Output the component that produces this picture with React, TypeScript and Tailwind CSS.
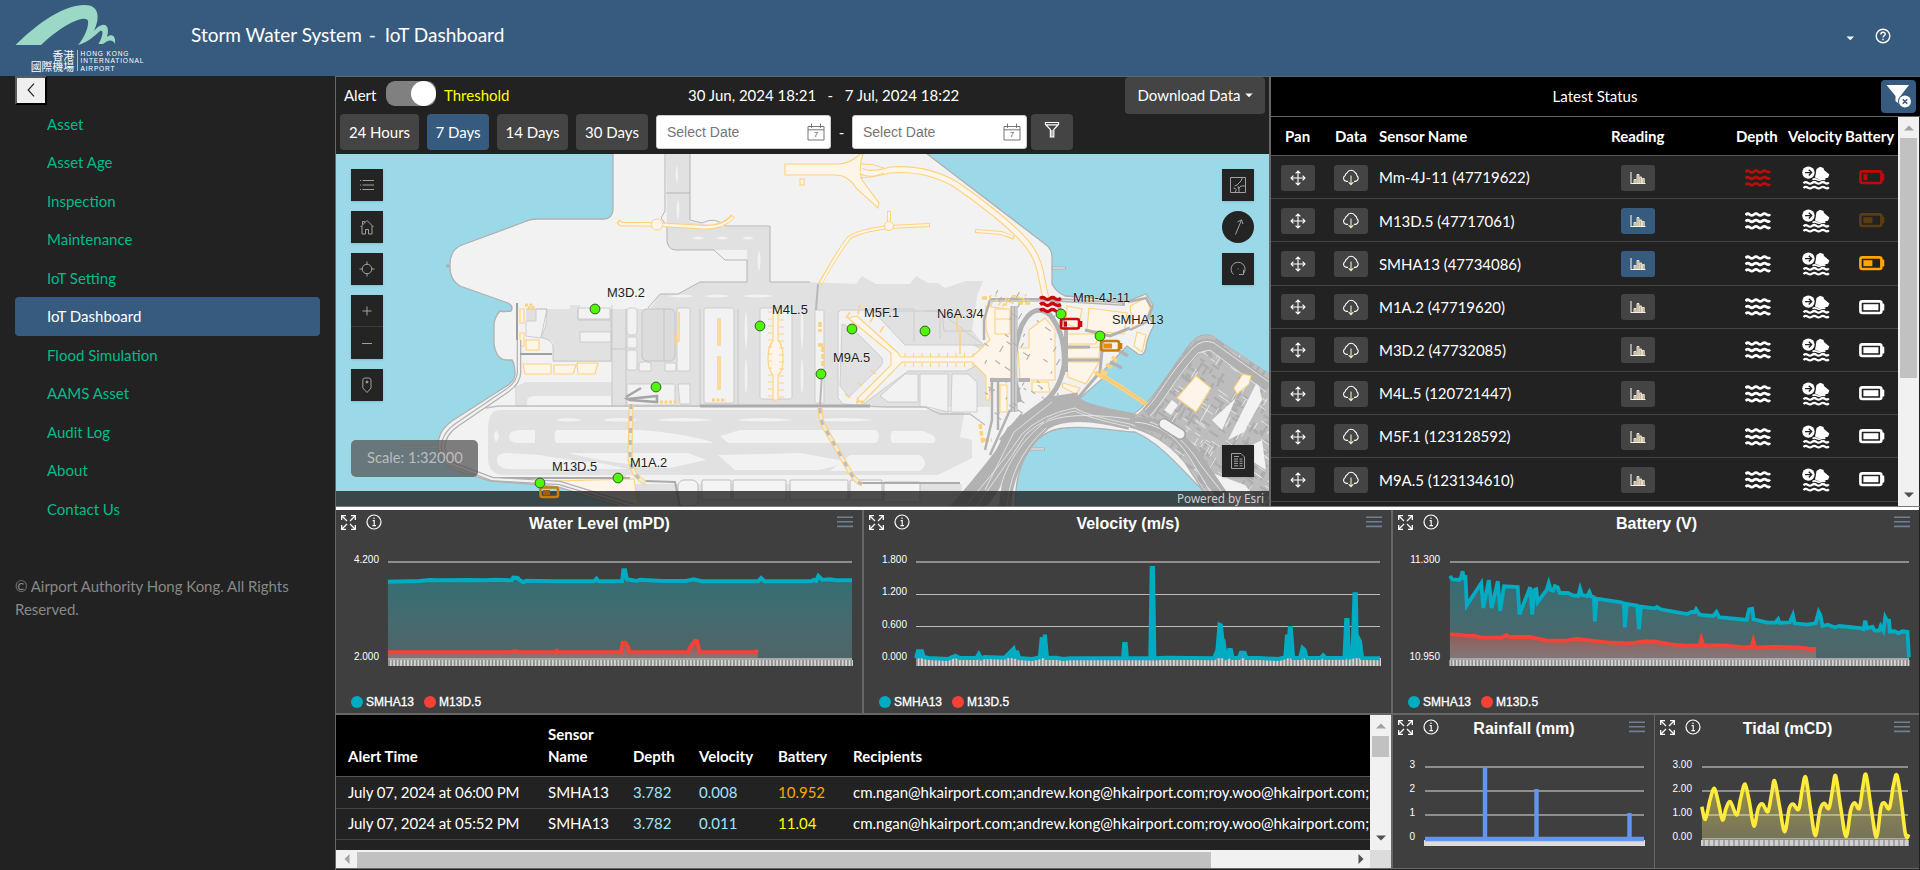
import type { ReactNode } from 'react';

type Pt = [number, number];

const NAV = ['Asset', 'Asset Age', 'Inspection', 'Maintenance', 'IoT Setting', 'IoT Dashboard', 'Flood Simulation', 'AAMS Asset', 'Audit Log', 'About', 'Contact Us'];

const SENSORS = [
  { name: 'Mm-4J-11 (47719622)', on: false, depth: '#b90e0a', battery: '#c00a0a', level: 4 },
  { name: 'M13D.5 (47717061)', on: true, depth: '#ffffff', battery: '#5a3d10', level: 9 },
  { name: 'SMHA13 (47734086)', on: true, depth: '#ffffff', battery: '#ffa500', level: 9 },
  { name: 'M1A.2 (47719620)', on: false, depth: '#ffffff', battery: '#ffffff', level: 15 },
  { name: 'M3D.2 (47732085)', on: false, depth: '#ffffff', battery: '#ffffff', level: 15 },
  { name: 'M4L.5 (120721447)', on: false, depth: '#ffffff', battery: '#ffffff', level: 15 },
  { name: 'M5F.1 (123128592)', on: false, depth: '#ffffff', battery: '#ffffff', level: 15 },
  { name: 'M9A.5 (123134610)', on: false, depth: '#ffffff', battery: '#ffffff', level: 15 },
];

const ALERTS = [
  { time: 'July 07, 2024 at 06:00 PM', depth: '3.782', velocity: '0.008', battery: '10.952', low: true },
  { time: 'July 07, 2024 at 05:52 PM', depth: '3.782', velocity: '0.011', battery: '11.04', low: false },
];
const RECIPIENTS = 'cm.ngan@hkairport.com;andrew.kong@hkairport.com;roy.woo@hkairport.com;';

/* ---------- icons ---------- */

function Waves({ color }: { color: string }) {
  const w = 'q2.1 -2.2 4.2 -0.5 t4.2 0 t4.2 0 t4.2 0 t4.2 0 t3.4 -0.4';
  return (
    <svg width="26" height="20" viewBox="0 0 26 20" fill="none" stroke={color} strokeWidth="2.7">
      <path d={`M.5 4 ${w} M.5 10.4 ${w} M.5 16.8 ${w}`} />
    </svg>
  );
}

function Flow() {
  const w = 'q2.1 -2 4.3 -0.4 t4.3 0 t4.3 0 t4.3 0 t4.3 0 t3.8 -0.4';
  return (
    <svg width="28" height="24" viewBox="0 0 28 24" fill="none">
      <path d="M13 11.5 L14.5 3 L18 .8 L21.5 2 L22 4 L27.4 8.6 L26 11.8 L23 12.2 L21 14 L15 12.6 Z" fill="#fff" />
      <circle cx="6.7" cy="6.8" r="6.9" fill="#222" />
      <circle cx="6.4" cy="6.6" r="6.2" fill="#fff" />
      <path d="M3 6.6 H9.6 M6.8 3.8 L9.6 6.6 L6.8 9.4" stroke="#222" strokeWidth="1.4" />
      <path d={`M1.5 17.2 ${w} M1.5 22 ${w}`} stroke="#fff" strokeWidth="2.2" />
      <path d="M10.5 13.6 q2 -1.400 4.300 -.1 t4.300 0 t4.300 0" stroke="#fff" strokeWidth="1.6" />
    </svg>
  );
}

function Battery({ color, level }: { color: string; level: number }) {
  return (
    <svg width="26" height="15" viewBox="0 0 26 15" fill="none">
      <rect x="1.4" y="1.4" width="21" height="11.6" rx="2" stroke={color} strokeWidth="2.6" />
      <rect x="22.5" y="3.6" width="2.8" height="7" rx="1.2" fill={color} />
      <rect x="4.4" y="4.2" width={level} height="6" fill={color} />
    </svg>
  );
}

function PanIcon() {
  return (
    <svg width="16" height="16" viewBox="0 0 16 16" fill="none" stroke="#fff" strokeWidth="1.1">
      <path d="M8 1 V15 M1 8 H15 M5.6 3.4 L8 1 L10.4 3.4 M5.6 12.6 L8 15 L10.4 12.6 M3.4 5.6 L1 8 L3.4 10.4 M12.6 5.6 L15 8 L12.6 10.4" />
    </svg>
  );
}

function CloudIcon() {
  return (
    <svg width="18" height="17" viewBox="0 0 18 17" fill="none" stroke="#fff" strokeWidth="1.1">
      <path d="M6 12.400 H4.400 A3.200 3.200 0 0 1 3.200 6.400 A3.600 3.600 0 0 1 5.200 3.800 A4.300 4.300 0 0 1 13 3.600 A4 4 0 0 1 15 6.800 A3.200 3.200 0 0 1 13.800 12.400 H12" />
      <path d="M9 6.600 V15.600 M6.600 13.200 L9 15.600 L11.400 13.200" stroke="#f6ecc9" />
    </svg>
  );
}

function BarsIcon() {
  return (
    <svg width="16" height="14" viewBox="0 0 16 14" fill="none">
      <path d="M1 1 V12.5 H15.500" stroke="#f7f3e4" strokeWidth="1.1" />
      <path d="M4 12 V8.500 H6 V12 M7 12 V3.500 H9 V12 M9.800 12 V6 H11.600 V12 M12.400 12 V7.500 H14.200 V12" fill="#a8a08a" stroke="#efe7cf" strokeWidth="1" />
    </svg>
  );
}

function ExpandIcon() {
  return (
    <svg width="15" height="15" viewBox="0 0 15 15" fill="none" stroke="#fff" strokeWidth="1.3">
      <path d="M.7 5 V.7 H5 M10 .7 H14.3 V5 M14.3 10 V14.3 H10 M5 14.3 H.7 V10" />
      <path d="M1 1 L6 6 M14 1 L9 6 M14 14 L9 9 M1 14 L6 9" />
    </svg>
  );
}

function InfoIcon() {
  return (
    <svg width="16" height="16" viewBox="0 0 16 16" fill="none" stroke="#fff">
      <circle cx="8" cy="8" r="7" strokeWidth="1.2" />
      <path d="M6.6 6.6 H8.2 V11.6 M6.4 11.6 H10" strokeWidth="1.1" />
      <circle cx="8" cy="4.3" r=".8" fill="#fff" stroke="none" />
    </svg>
  );
}

function MenuIcon() {
  return (
    <svg width="16" height="12" viewBox="0 0 16 12" stroke="#6e8192" strokeWidth="1.6">
      <path d="M0 1.2 H16 M0 5.8 H16 M0 10.4 H16" />
    </svg>
  );
}

function CalendarIcon() {
  return (
    <svg width="18" height="18" viewBox="0 0 18 18" fill="none" stroke="#777" strokeWidth="1">
      <path d="M1 3.5 H17 V17 H1 Z M1 6.8 H17 M4.5 .5 V5 M13.5 .5 V5" />
      <text x="9" y="14.4" textAnchor="middle" fontSize="8" fill="#555" stroke="none" fontFamily="Liberation Sans, sans-serif">7</text>
    </svg>
  );
}

function Triangle({ dir, dark }: { dir: 'up' | 'down' | 'left' | 'right'; dark?: boolean }) {
  const d = { up: 'M0 7.5 L5 2.5 L10 7.5 Z', down: 'M0 2.5 L5 7.5 L10 2.5 Z', left: 'M7.5 0 L2.5 5 L7.5 10 Z', right: 'M2.5 0 L7.5 5 L2.5 10 Z' }[dir];
  return (
    <svg width="10" height="10" viewBox="0 0 10 10" className="shrink-0">
      <path d={d} fill={dark ? '#505050' : '#a3a3a3'} />
    </svg>
  );
}

/* ---------- map ---------- */

const PIERS = Array.from({ length: 13 }, (_, i) => 312 + i * 7);
const SPINE = Array.from({ length: 9 }, (_, i) => 905 + i * 8.5);

function lcg(seed: number) {
  let s = seed;
  return () => {
    s = (s * 1664525 + 1013904223) % 4294967296;
    return s / 4294967296;
  };
}

function scatter(seed: number, n: number, x: number, y: number, w: number, h: number, len: number) {
  const r = lcg(seed);
  let d = '';
  for (let i = 0; i < n; i++) {
    const a = r() > 0.45 ? 0.6 : 2.1;
    const l = len * (0.4 + r());
    const px = x + r() * w;
    const py = y + r() * h;
    d += `M${px.toFixed(1)} ${py.toFixed(1)} l${(Math.cos(a) * l).toFixed(1)} ${(Math.sin(a) * l).toFixed(1)} `;
  }
  return d;
}

const MARKERS: { x: number; y: number; label?: string; lx?: number; ly?: number }[] = [
  { x: 595, y: 309, label: 'M3D.2', lx: 607, ly: 297 },
  { x: 656, y: 387 },
  { x: 760, y: 326, label: 'M4L.5', lx: 772, ly: 314 },
  { x: 540, y: 483, label: 'M13D.5', lx: 552, ly: 471 },
  { x: 618, y: 478, label: 'M1A.2', lx: 630, ly: 467 },
  { x: 852, y: 329, label: 'M5F.1', lx: 864, ly: 317 },
  { x: 925, y: 331, label: 'N6A.3/4', lx: 937, ly: 318 },
  { x: 821, y: 374, label: 'M9A.5', lx: 833, ly: 362 },
  { x: 1061, y: 314, label: 'Mm-4J-11', lx: 1073, ly: 302 },
  { x: 1100, y: 336, label: 'SMHA13', lx: 1112, ly: 324 },
];

function MapCanvas() {
  const bld = { fill: '#fdf5ea', stroke: '#ffd27a', strokeWidth: 1.1 };
  const lite = { fill: '#f2f2f2', stroke: '#c9c9c9', strokeWidth: 0.9 };
  return (
    <svg viewBox="336 154 933 352" className="block h-[352px] w-[933px]">
      <defs>
        <clipPath id="island">
          <path d="M1135 416 C1150 405 1160 385 1190 344 Q1200 333 1212 336 L1269 374 V506 H1215 C1190 465 1170 440 1135 426 Z" />
        </clipPath>
      </defs>
      <rect x="336" y="154" width="933" height="352" fill="#f2f2f2" />

      {/* taxiways and aprons */}
      <g fill="#e1e1e1">
        <path d="M666 154 H690 V222 L724 227 H770 V282 H806 L856 284 L862 276 L876 284 H910 L916 276 L928 283 H938 L945 288 L966 281 H983 L977 296 L972 330 L984 345 V362 L990 400 V407 H517 V386 L526 382 L612 382 V362 H553 V342 L541 338 L526 336 V309 H570 V305 H580 V309 H650 L660 294 H678 L700 282 H747 V250 H675 Q667 248 667 240 Z" />
        <path d="M500 410 H965 L960 437 L972 440 V458 L938 475 H505 Q488 475 488 458 V425 Q490 410 500 410 Z" />
        <path d="M612 475 H626 V506 H612 Z M635 484 H962 V506 H635 Z" />
      </g>
      {/* infields */}
      <g {...lite}>
        <rect x="627" y="308" width="10" height="27" rx="3" />
        <rect x="627" y="337" width="10" height="11" rx="2" />
        <rect x="627" y="350" width="10" height="20" rx="2" />
        <rect x="677" y="308" width="13" height="63" rx="1" />
        <rect x="704" y="308" width="30" height="95" rx="2" />
        <rect x="760" y="308" width="32" height="91" rx="2" />
        <rect x="580" y="332" width="31" height="10" />
        <path d="M578 308 H610 V319 H578 Z M547 309 L546 325 L541 338 L526 336 V321 H536 V309 Z" />
        <path d="M639 371 V363 Q645 360 651 363 V371 Z M665 371 V363 H676 V371 Z M678 384 H690 V404 H680 Z" />
        <rect x="627" y="384" width="48" height="21" rx="1" />
        <rect x="815" y="310" width="9" height="93" rx="1" />
      </g>
      <path d="M843 404 L838 398 V313 L841 310 H880 L906 340 H965 L983 350 V362 L966 371 H908 L862 405 Z" {...lite} />
      <path d="M842 324 L852 328 L882 358 Q884 363 880 367 L849 397 L840 386 Z M873 311 H938 L984 345 H905 Z" fill="#e1e1e1" stroke="#cccccc" strokeWidth=".9" />
      <path d="M918 374 V402 H888 L880 396 L905 374 Z M920 374 H948 V412 L928 407 H920 Z M952 374 H968 L977 382 V412 H951 Z" {...lite} />
      <path d="M878 309 H914 V341 M924 311 H942 L944 331 H972 M940 339 V318" fill="none" stroke="#cccccc" />
      <rect x="642" y="309" width="33" height="52" rx="5" fill="#dcdcdc" stroke="#c4c4c4" />
      <path d="M664 309 V361" stroke="#c4c4c4" />
      <path d="M527 407 V401 Q527 396 535 396 H611 V406 Z" fill="#f2f2f2" />
      <path d="M526 309 H547 L541 337 Q552 340 553 346 V361 H611 V309 M612 305 V407 M626 309 V407 M612 349 H626 M700 309 V407 M738 309 V404 M516 385 V407 M578 309 V320 H610" fill="none" stroke="#c6c6c6" strokeWidth=".9" />
      <g fill="#f2f2f2">
        <path d="M509 437 Q509 430 520 430 H535 V443 H520 Q509 443 509 437 Z" />
        <path d="M496 430 Q502 437 496 442 Q492 437 496 430 Z" />
        <path d="M556 430 H640 Q690 434 714 443 H556 Q553 436 556 430 Z" />
        <path d="M720 436 L740 430 H876 Q882 436 876 443 H728 Z" />
        <path d="M892 431 H922 Q940 436 934 443 H892 Q889 437 892 431 Z" />
        <path d="M497 460 Q496 453 508 453 L540 455 Q565 460 600 463 L628 469 H508 Q497 468 497 460 Z" />
        <path d="M568 453 H688 L706 460 L670 468 Q610 464 568 453 Z" />
        <path d="M718 455 L800 453 L850 462 L820 470 H735 Z" />
        <path d="M850 455 H920 Q930 463 920 471 H830 Z" />
        <path d="M555 420 Q567 416 583 420 Q567 423 555 420 Z M603 420 Q615 416 640 420 Q615 423 603 420 Z M655 420 Q680 416 715 420 Q680 423 655 420 Z M735 420 Q760 416 795 420 Q760 423 735 420 Z M815 420 Q840 416 875 420 Q840 423 815 420 Z" />
        <path d="M677 165 q2 9 0 18 q-3 -9 0 -18 M678 199 q3 10 0 22 q-3 -11 0 -22 M692 238 q6 -3 12 0 q-6 3 -12 0 M716 238 q6 -3 12 0 q-6 3 -12 0 M742 238 q6 -3 12 0 q-6 3 -12 0 M759 250 q3 10 0 22 q-3 -11 0 -22 M746 310 q3 20 0 40 q-3 -20 0 -40 M746 357 q3 20 0 38 q-3 -19 0 -38 M802 306 q3 22 0 44 q-3 -22 0 -44 M802 357 q3 20 0 38 q-3 -19 0 -38 M668 296 q14 -3 26 0 q-12 3 -26 0 M704 296 q14 -3 26 0 q-12 3 -26 0 M742 296 q16 -3 32 0 q-16 3 -32 0" />
      </g>
      <path d="M665 154 V211 L661 218 L667 226 V241 Q668 249 675 250 H714 L725 260 H747 V282 H700 L678 294 H660 L648 308 M690 154 V220 L702 223 Q716 216 724 226 H770 V282 H810 M666 193 H690" fill="none" stroke="#b5b5b5" />

      {/* perimeter roads */}
      <path d="M486 408 L498 406 H860 L888 407 H925 L940 414 H970 L985 425" fill="none" stroke="#c0c0c0" strokeWidth="1.3" />
      <path d="M700 406 H870" stroke="#ababab" strokeWidth="3.2" />
      <g fill="#f4f4f4" stroke="#bdbdbd" strokeWidth="1">
        <rect x="702" y="480" width="29" height="20" rx="1" />
        <rect x="733" y="480" width="53" height="20" rx="1" />
        <rect x="790" y="480" width="58" height="20" rx="1" />
        <rect x="850" y="480" width="32" height="20" rx="1" />
        <rect x="884" y="482" width="36" height="20" rx="1" />
        <rect x="678" y="480" width="20" height="26" rx="6" />
      </g>
      <path d="M500 478 H630 M645 481 L675 482 L680 506 M862 483 H960" fill="none" stroke="#ababab" strokeWidth="2" />

      {/* piers and buildings */}
      <g {...bld}>
        <path d="M523 364 H551 V374 H525 Z M554 365 H576 L573 374 H554 Z M577 363 H598 L595 374 H578 Z" />
        <rect x="526" y="340" width="13" height="10" />
        <rect x="520" y="309" width="4" height="14" />
        <rect x="520" y="333" width="4" height="13" />
        <path d="M785 164 H838 Q850 164 860 154 H863 Q858 168 862 180 L879 203 L878 208 L857 189 Q848 175 836 175 H785 Z" />
        <path d="M773 309 H778 V340 Q783 345 783 359 Q783 372 778 375 V400 H773 V375 Q768 369 768 359 Q768 346 773 341 Z" />
        <path d="M553 481 L634 479 L638 506 H622 Z" />
        <path d="M848 318 L857 316 L897 352 L901 357 H972 L990 340 L986 330 V306 L1011 310 V380 L992 378 L989 400 H986 V376 L972 362 H902 L862 403 L857 399 L891 365 V353 Z" />
        <path d="M1029 330 L1045 318 L1055 330 V380 H1020 L1018 348 H1029 Z" />
        <path d="M1032 382 H1048 L1050 392 H1032 Z M1000 385 H1007 V412 H1000 Z M1032 435 L1049 415 L1052 418 L1036 437 Z" />
      </g>
      <g stroke="#ffd27a" fill="none">
        {PIERS.map((y) => (
          <path key={y} d={`M768 ${y} h4 M779 ${y + 1} h5`} />
        ))}
        {SPINE.map((x) => (
          <path key={x} d={`M${x} 353 v4 M${x} 363 v4`} />
        ))}
        <path d="M850 312 l-4 6 M860 305 l-2 9 M870 322 l4 -6 M880 332 l4 -6 M850 398 l-5 -4 M862 386 l-5 -4 M876 374 l-5 -4 M718 318 V346 M718 356 V390 M720 318 V346 M720 356 V390 M957 308 v22 h3 v24 M953 315 h10 M679 312 v30" strokeWidth="1.4" />
        <path d="M525 305 h8 v3 h-5 M676 331 v12 M660 402 h18 M712 400 h14 M856 402 h9" strokeWidth="3" strokeDasharray="3 1.5" />
        <path d="M820 322 V332 M818 345 H823 V368 M1000 300 h14 v-6 M982 298 h8 M1018 303 h12 M980 424 l3 20 M984 440 h8" strokeWidth="3.4" strokeDasharray="5 2" />
      </g>
      {/* airport roads */}
      <g fill="none">
        <path d="M618 221 L621 224 L657 224.5 L700 227 Q722 229 733 216" stroke="#ffd27a" strokeWidth="4.6" />
        <path d="M619 222 L621 224 L657 224.5 L700 227 Q722 229 733 217" stroke="#fdf5ea" strokeWidth="2.4" />
        <circle cx="657" cy="224.500" r="5.600" fill="#fdf5ea" stroke="#ffd27a" />
        <path d="M861 171 Q870 176 890 170 Q925 167 955 184 C985 204 1010 226 1020 236 Q1036 252 1040 270 L1047 304" stroke="#ffd27a" strokeWidth="7" />
        <path d="M861 171 Q870 176 890 170 Q925 167 955 184 C985 204 1010 226 1020 236 Q1036 252 1040 270 L1047 304" stroke="#fdf5ea" strokeWidth="4.800" />
        <path d="M860 164 Q873 163 884 168 M860 178 Q873 178 884 173" stroke="#ffd27a" />
        <path d="M975 231 L1001 233 L1014 238 M889 211 V226 M930 225 L889 227 Q858 231 849 238 Q838 252 820 284" stroke="#ffd27a" strokeWidth="4" />
        <path d="M976 231 L1001 233 L1013 237 M889 212 V226 M929 225 L889 227 Q858 231 849 238 Q838 252 821 283" stroke="#fdf5ea" strokeWidth="2.2" />
        <circle cx="889" cy="226" r="4.500" fill="#fdf5ea" stroke="#ffd27a" />
        <path d="M631 404 L630 460 Q632 475 645 483 M820 408 Q820 422 826 430 L850 472 Q856 482 862 484" stroke="#ffd27a" strokeWidth="5" />
        <path d="M631 404 L630 460 Q632 475 645 483 M820 408 Q820 422 826 430 L850 472 Q856 482 862 484" stroke="#efe9dc" strokeWidth="2.8" />
        <path d="M631 404 L630 460 Q632 475 645 483 M820 408 Q820 422 826 430 L850 472 Q856 482 862 484" stroke="#bdbdbd" strokeWidth="3" strokeDasharray="5 7" />
        <path d="M626 397 L641 388 M628 399 L657 396 V402 L630 400 Z" stroke="#a6a6a6" strokeWidth="2.6" />
        <path d="M818 284 L816 310 M822 374 L820 405" stroke="#b8b8b8" strokeWidth="2" />
      </g>
      <rect x="800" y="179" width="4" height="6" {...bld} />

      {/* water */}
      <g fill="#9bd9e9" stroke="#b0b0b0" strokeWidth="1.3">
        <path d="M330 150 H613 V210 Q612 219 604 219 H536 Q530 219 524 222 L462 245 Q450 250 450 264 V268 Q450 280 460 286 L508 303 Q514 306 511 311 Q504 312 500 311 Q494 318 494 325 V344 Q496 359 506 360 L512 360 Q515 364 515 375 Q514 382 505 387 L452 421 Q438 431 438 446 Q440 464 456 470 L490 481 L530 484 L558 487 L625 508 H330 Z" />
        <path d="M922 150 L1045 244 Q1052 249 1052 257 V284 Q1056 292 1065 296 L1128 301 L1146 294 L1153 305 L1149 318 L1154 325 Q1146 340 1146 348 Q1144 357 1138 354 L1127 346 L1104 370 L1103 378 L1078 400 Q1080 412 1094 413 L1130 416 C1150 405 1160 385 1190 344 Q1200 332 1212 336 L1275 378 V150 Z" />
        <path d="M1016 510 C1013 470 1030 430 1065 428 C1090 425 1120 432 1135 432 C1165 445 1190 480 1204 491 L1222 510 Z" />
      </g>
      <path d="M519 340 V372 Q519 382 508 390 L458 424 Q443 434 443 448 Q446 464 460 467 L492 479 L560 483 L634 506" fill="none" stroke="#b0b0b0" strokeWidth="4.600" />
      <path d="M519 340 V372 Q519 382 508 390 L458 424 Q443 434 443 448 Q446 464 460 467 L492 479 L560 483 L634 506" fill="none" stroke="#f2f2f2" strokeWidth="2.200" />
      <path d="M398 447 H438 M446 266 H450 M1052 268 H1066 M1028 449 H1045" stroke="#b0b0b0" strokeWidth="3.200" />
      <path d="M398 447 H438 M1053 268 H1065 M1029 449 H1044" stroke="#f2f2f2" strokeWidth="1.200" />
      <path d="M520 354 H552 M517 303 V340" fill="none" stroke="#9f9f9f" strokeWidth="2" />

      {/* passenger district */}
      <g {...bld}>
        <path d="M995 309 H1010 V334 H995 Z M996 319 H1010" />
        <path d="M1089 308 L1127 313 L1124 334 L1087 330 Z" />
        <path d="M1067 306 L1082 309 L1078 328 L1066 324 Z" />
        <path d="M1066 349 L1100 347 L1099 358 H1067 Z M1066 362 H1099 L1086 384 L1068 377 Z" />
        <path d="M1130 306 L1146 298 L1150 308 L1146 322 L1133 328 Z M1066 334 H1098 L1096 344 H1067 Z" />
        <path d="M1063 383 L1080 388 L1076 394 L1062 387 Z M1137 332 L1146 335 L1142 352 L1134 346 Z M1052 405 l8 -5 l3 6 l-8 5 Z" />
      </g>
      <g fill="none" stroke="#b2b2b2">
        <path d="M1014 306 V412" strokeWidth="7" />
        <path d="M1020 402 Q1008 360 1022 325 Q1034 302 1050 315 Q1066 335 1064 365 Q1060 392 1040 405 L1020 420" strokeWidth="5" />
        <path d="M1057 300 L1066 330 L1066 372 M990 300 H1060 M1060 300 L1125 304 M990 380 H1030" strokeWidth="4" />
        <path d="M990 300 L984 320 V340 M992 380 V420 L985 450 M998 380 V430 M1010 410 L990 455 M1022 414 L1000 440" strokeWidth="2.500" />
        <path d="M1066 360 H1100 M1066 347 H1090 M1103 340 L1100 372 L1078 398 M1085 330 L1110 336 L1130 328" strokeWidth="3" />
        <path d="M1128 302 L1146 298 L1152 308 L1146 322 L1130 330" strokeWidth="2.500" />
        <path d="M955 512 Q1000 460 1018 432 Q1040 410 1075 404 Q1085 412 1130 420 Q1165 428 1190 458 L1225 512" strokeWidth="15" />
        <path d="M1005 512 Q1005 462 1045 424 Q1070 408 1130 424" strokeWidth="12" />
        <path d="M975 512 Q1003 470 1030 436" strokeWidth="14" />
        <path d="M985 480 L1010 430 L1050 400 L1078 396" strokeWidth="7" />
        <path d="M1110 362 l12 6 M1118 350 l10 6" strokeWidth="3.500" />
      </g>
      <g fill="none" stroke="#ededed" strokeWidth=".8">
        <path d="M960 512 Q1005 460 1022 434 Q1042 414 1075 408 Q1085 415 1130 424 Q1165 433 1186 462 L1219 512" />
        <path d="M972 512 Q1003 470 1026 434 Q1046 416 1075 411 Q1088 418 1130 427" />
        <path d="M996 512 Q1000 460 1042 424 Q1066 410 1130 419 M1007 512 Q1008 462 1046 428" />
        <path d="M1013 306 V412 M1016 306 V412 M1022 400 Q1011 360 1024 328 Q1034 308 1048 318 Q1062 338 1061 364" />
        <path d="M985 490 L1014 432 L1052 402 M1060 300 L1122 304 M990 301 H1050" />
      </g>
      <path d={scatter(7, 60, 984, 290, 78, 130, 5)} stroke="#b2b2b2" strokeWidth="1.200" />
      <path d={scatter(17, 16, 984, 294, 50, 12, 4)} stroke="#ffd27a" strokeWidth="1.600" />
      <path d="M1112 357 l5 4 M1106 364 l6 4 M1101 370 l6 4 M1095 372 l8 6" stroke="#ffd27a" strokeWidth="3.600" />
      <path d="M1100 374 L1122 388 L1152 408" stroke="#ffd27a" strokeWidth="4.500" />
      <path d="M1102 375 L1122 388 L1150 406" stroke="#f6c97a" strokeWidth="1.500" />

      {/* south-east island */}
      <g clipPath="url(#island)">
        <rect x="1130" y="330" width="140" height="180" fill="#bdbdbd" />
        <path d={scatter(3, 300, 1140, 336, 130, 170, 10)} stroke="#adadad" strokeWidth="2.200" />
        <path d={scatter(11, 130, 1150, 345, 120, 160, 10)} stroke="#ececec" strokeWidth=".9" />
        <path d="M1212 420 L1236 398 L1222 430 Z M1228 440 L1258 380 L1262 400 L1244 432 Z M1204 470 L1245 485 L1262 506 H1215 Z M1238 452 L1262 440 L1266 470 Z" fill="#f2f2f2" />
        <path d="M1145 412 C1160 398 1170 375 1195 350 Q1203 342 1212 345 L1269 386" fill="none" stroke="#b0b0b0" strokeWidth="11" />
        <path d="M1145 410 C1158 398 1168 375 1193 348 Q1203 338 1214 343 L1269 382 M1150 416 C1165 400 1175 378 1198 353 L1210 350 L1266 392" fill="none" stroke="#eaeaea" strokeWidth=".9" />
        <path d="M1130 424 C1160 420 1178 436 1192 452 L1225 500" fill="none" stroke="#b0b0b0" strokeWidth="12" />
        <path d="M1130 422 C1162 422 1178 440 1190 458 L1219 506 M1150 422 C1175 430 1190 448 1200 464 L1228 500" fill="none" stroke="#eaeaea" strokeWidth=".9" />
        <path d="M1196 376 L1211 388 L1196 412 L1177 398 Z M1243 374 L1251 376 L1249 384 L1237 394 L1234 388 Z" {...bld} />
        <path d="M1172 400 L1178 405 L1171 415 L1164 410 Z" fill="#f2f2f2" />
        <path d="M1164 424 L1180 434" stroke="#a5a5a5" strokeWidth="12" strokeLinecap="round" />
        <path d="M1164 424 L1180 434" stroke="#f2f2f2" strokeWidth="9" strokeLinecap="round" />
      </g>

      {/* attribution band */}
      <rect x="336" y="491" width="933" height="15" fill="#222" fillOpacity=".8" />

      {/* sensor status symbols */}
      <path d="M1040 298.500 q2.500 -2 5 0 t5 0 t5 0 t6 0 M1040 304.500 q2.500 -2 5 0 t5 0 t5 0 t6 0 M1040 310.500 q2.500 -2 5 0 t5 0 t5 0 t6 0" fill="none" stroke="#c9090b" strokeWidth="3.200" />
      <g fill="none">
        <rect x="1061" y="319" width="18" height="9.500" rx="2" stroke="#d4080a" strokeWidth="2.600" />
        <path d="M1081 321 v6" stroke="#d4080a" strokeWidth="2.600" />
        <rect x="1064" y="321.500" width="3" height="5" fill="#b01010" />
        <rect x="1101" y="341" width="18" height="9.500" rx="2" stroke="#c97d06" strokeWidth="2.600" />
        <path d="M1121 343 v6" stroke="#c97d06" strokeWidth="2.600" />
        <rect x="1104" y="343.500" width="8" height="5" fill="#e08e0b" />
        <rect x="540.500" y="487.500" width="17.500" height="9.500" rx="2" stroke="#c97d06" strokeWidth="2.600" />
        <rect x="543" y="490" width="7" height="5" fill="#9b6104" />
      </g>
      {MARKERS.map((m) => (
        <circle key={`${m.x}-${m.y}`} cx={m.x} cy={m.y} r="4.900" fill="#4ef806" stroke="#3a5a2c" strokeWidth="1" />
      ))}
      <g fontFamily="Liberation Sans, Arial, sans-serif" fontSize="12.900" fill="#1c1c1c" stroke="#ffffff" strokeOpacity=".35" strokeWidth="1.200" style={{ paintOrder: 'stroke' }}>
        {MARKERS.filter((m) => m.label).map((m) => (
          <text key={m.label} x={m.lx} y={m.ly}>{m.label}</text>
        ))}
      </g>
    </svg>
  );
}

function MapButton({ children, round }: { children: ReactNode; round?: boolean }) {
  return (
    <button className={round ? 'flex h-8 w-8 items-center justify-center rounded-full bg-[#242424]' : 'flex h-8 w-8 items-center justify-center bg-[#242424] shadow'}>
      <svg width="16" height="16" viewBox="0 0 16 16" fill="none" stroke="#a0a0a0" strokeWidth="1">
        {children}
      </svg>
    </button>
  );
}

/* ---------- charts ---------- */

const toPage = (pts: Pt[], ox: number, sx: number, oy: number): Pt[] => pts.map(([x, y]) => [ox + x / sx, oy + y / 3]);
const line = (pts: Pt[]) => pts.map(([x, y], i) => `${i ? 'L' : 'M'}${x.toFixed(1)} ${y.toFixed(1)}`).join(' ');

function smooth(pts: Pt[]) {
  let d = `M${pts[0][0].toFixed(1)} ${pts[0][1].toFixed(1)}`;
  for (let i = 0; i < pts.length - 1; i++) {
    const p0 = pts[Math.max(0, i - 1)];
    const p1 = pts[i];
    const p2 = pts[i + 1];
    const p3 = pts[Math.min(pts.length - 1, i + 2)];
    d += ` C${(p1[0] + (p2[0] - p0[0]) / 6).toFixed(1)} ${(p1[1] + (p2[1] - p0[1]) / 6).toFixed(1)} ${(p2[0] - (p3[0] - p1[0]) / 6).toFixed(1)} ${(p2[1] - (p3[1] - p1[1]) / 6).toFixed(1)} ${p2[0].toFixed(1)} ${p2[1].toFixed(1)}`;
  }
  return d;
}

const LEVEL_A = toPage([[168, 245], [260, 243], [290, 240], [320, 241], [400, 240], [450, 241], [480, 239], [528, 241], [532, 233], [545, 234], [550, 240], [562, 247], [570, 242], [650, 244], [767, 244], [774, 236], [780, 244], [848, 244], [852, 211], [857, 211], [862, 238], [890, 243], [900, 239], [925, 241], [965, 243], [1035, 243], [1055, 238], [1080, 244], [1243, 244], [1252, 234], [1262, 244], [1398, 244], [1405, 240], [1412, 243], [1418, 228], [1430, 240], [1450, 238], [1470, 241], [1516, 241]], 330, 2.904, 500);
const LEVEL_B = toPage([[168, 457], [525, 457], [537, 454], [550, 457], [652, 457], [658, 452], [664, 457], [845, 457], [850, 428], [857, 428], [865, 440], [870, 457], [1040, 457], [1048, 438], [1060, 423], [1066, 424], [1073, 457], [1235, 457], [1242, 451]], 330, 2.904, 500);
const VELOCITY = toPage([[163, 475], [168, 454], [180, 454], [186, 472], [200, 474], [255, 477], [277, 467], [290, 474], [338, 474], [345, 462], [352, 475], [362, 471], [420, 473], [446, 446], [452, 475], [456, 452], [462, 474], [500, 477], [522, 472], [528, 412], [533, 470], [537, 404], [543, 474], [570, 473], [590, 477], [610, 475], [764, 475], [767, 432], [772, 432], [775, 475], [843, 475], [847, 204], [851, 204], [855, 475], [893, 473], [1028, 475], [1038, 450], [1044, 374], [1048, 376], [1053, 424], [1056, 424], [1062, 474], [1068, 472], [1072, 450], [1077, 450], [1082, 474], [1100, 474], [1106, 458], [1117, 458], [1122, 474], [1160, 474], [1215, 477], [1235, 472], [1240, 404], [1243, 450], [1248, 384], [1251, 384], [1258, 474], [1278, 474], [1285, 444], [1291, 450], [1297, 474], [1338, 474], [1345, 466], [1352, 474], [1407, 473], [1412, 360], [1416, 360], [1420, 473], [1430, 470], [1436, 283], [1440, 283], [1443, 462], [1447, 414], [1452, 424], [1458, 474], [1510, 475]], 860, 2.904, 500);
const BATTERY_A = toPage([[203, 228], [210, 238], [230, 240], [236, 230], [240, 214], [244, 240], [248, 226], [252, 316], [265, 295], [294, 250], [300, 324], [316, 240], [324, 324], [342, 244], [349, 333], [360, 259], [400, 261], [405, 343], [436, 262], [442, 344], [448, 270], [454, 268], [458, 306], [484, 270], [490, 250], [495, 270], [503, 272], [508, 258], [516, 262], [522, 279], [545, 279], [560, 286], [576, 288], [581, 266], [587, 285], [602, 288], [608, 276], [614, 290], [621, 292], [624, 364], [629, 296], [700, 307], [708, 310], [711, 382], [717, 312], [747, 317], [752, 388], [758, 320], [798, 325], [804, 321], [815, 328], [892, 342], [905, 336], [914, 336], [918, 328], [928, 344], [945, 346], [968, 348], [977, 336], [985, 352], [1000, 353], [1065, 360], [1072, 328], [1081, 326], [1085, 358], [1110, 364], [1125, 368], [1148, 368], [1156, 358], [1160, 369], [1190, 367], [1199, 345], [1204, 370], [1240, 374], [1265, 370], [1274, 336], [1279, 346], [1285, 378], [1300, 374], [1320, 382], [1335, 378], [1395, 384], [1404, 388], [1409, 362], [1415, 385], [1430, 380], [1437, 392], [1449, 392], [1454, 378], [1462, 392], [1467, 352], [1472, 362], [1478, 362], [1481, 395], [1495, 394], [1505, 400], [1518, 394], [1532, 396], [1536, 472]], 1380, 2.904, 500);
const BATTERY_B = toPage([[203, 403], [225, 404], [250, 407], [275, 408], [295, 413], [355, 413], [367, 405], [375, 411], [435, 411], [485, 422], [540, 422], [570, 417], [610, 421], [660, 427], [720, 430], [770, 424], [800, 425], [845, 433], [885, 437], [928, 436], [933, 416], [939, 436], [1000, 436], [1060, 442], [1079, 441], [1084, 422], [1090, 443], [1150, 440], [1220, 443], [1250, 447], [1266, 447]], 1380, 2.904, 500);
const TIDAL = toPage([[957, 320], [967, 358], [980, 300], [992, 265], [1003, 305], [1015, 360], [1025, 325], [1037, 305], [1055, 345], [1066, 295], [1078, 252], [1090, 305], [1103, 378], [1115, 325], [1127, 312], [1142, 335], [1152, 285], [1161, 242], [1175, 320], [1189, 395], [1202, 325], [1213, 312], [1228, 328], [1238, 270], [1248, 232], [1262, 330], [1275, 407], [1288, 330], [1300, 310], [1313, 325], [1323, 270], [1332, 228], [1347, 330], [1361, 410], [1374, 330], [1385, 308], [1398, 325], [1408, 260], [1417, 225], [1432, 330], [1446, 412], [1458, 325], [1468, 308], [1482, 325], [1493, 260], [1503, 225], [1515, 300], [1526, 395], [1532, 413], [1536, 403]], 1360, 2.8, 700);

function Defs() {
  return (
    <svg width="0" height="0" className="absolute">
      <defs>
        <linearGradient id="tealFill" x1="0" y1="0" x2="0" y2="1">
          <stop offset="0" stopColor="#16aebf" stopOpacity=".42" />
          <stop offset="1" stopColor="#7fd5e0" stopOpacity=".25" />
        </linearGradient>
        <linearGradient id="redFill" x1="0" y1="0" x2="0" y2="1">
          <stop offset="0" stopColor="#f44336" stopOpacity=".42" />
          <stop offset="1" stopColor="#f9a19b" stopOpacity=".3" />
        </linearGradient>
        <linearGradient id="yellowFill" x1="0" y1="0" x2="0" y2="1">
          <stop offset="0" stopColor="#ffeb3b" stopOpacity=".5" />
          <stop offset="1" stopColor="#fff59d" stopOpacity=".28" />
        </linearGradient>
        <pattern id="ticks" width="3.45" height="8" patternUnits="userSpaceOnUse">
          <rect width="3.45" height="8" fill="#8c8c8c" />
          <rect width="1.7" height="8" fill="#d6d6d6" />
        </pattern>
        <pattern id="ticksWide" width="5" height="8" patternUnits="userSpaceOnUse">
          <rect width="5" height="8" fill="#a4a4a4" />
          <rect width="3" height="8" fill="#cfcfcf" />
        </pattern>
      </defs>
    </svg>
  );
}

function Labels({ x, items }: { x: number; items: [string, number][] }) {
  return (
    <g fontFamily="Liberation Sans, Arial, sans-serif" fontSize="10" fill="#fff" textAnchor="end">
      {items.map(([t, y]) => (
        <text key={t} x={x} y={y}>{t}</text>
      ))}
    </g>
  );
}

function Panel({ title, legend, children }: { title: string; legend?: boolean; children: ReactNode }) {
  return (
    <section className="flex h-full min-w-0 flex-1 flex-col bg-[#3f3f3f]">
      <header className={legend ? 'flex h-[31px] shrink-0 items-start pt-[5px] pr-[9px] pl-[5px]' : 'flex h-[30px] shrink-0 items-start pt-[5px] pr-[9px] pl-[5px]'}>
        <ExpandIcon />
        <span className="-mt-px ml-[10px]"><InfoIcon /></span>
        <h3 className="mr-[-16px] -ml-[36px] flex-1 text-center font-['Liberation_Sans'] text-[16px] leading-[18px] font-bold text-white">{title}</h3>
        <span className="mt-px"><MenuIcon /></span>
      </header>
      {children}
      {legend && (
        <div className="flex h-[22px] items-center pt-[2px] pl-[15px] font-['Liberation_Sans'] text-[12px] text-white [-webkit-text-stroke:0.3px_white]">
          <span className="h-3 w-3 rounded-full bg-[#00acc1]" />
          <span className="ml-[3px]">SMHA13</span>
          <span className="ml-[10px] h-3 w-3 rounded-full bg-[#f44336]" />
          <span className="ml-[3px]">M13D.5</span>
        </div>
      )}
    </section>
  );
}

function DateInput() {
  return (
    <div className="flex h-[34px] w-[175px] items-center justify-between rounded-[3px] border border-[#ccc] bg-white pr-[5px] pl-[10px]">
      <span className="font-['Liberation_Sans'] text-[14px] text-[#757575]">Select Date</span>
      <CalendarIcon />
    </div>
  );
}

export default function App() {
  return (
    <div className="h-[870px] w-[1920px] overflow-hidden bg-[#222] font-['Lato',sans-serif] text-[15px] leading-[22.5px] text-white">
      <Defs />
      <header className="flex h-[76px] items-center bg-[#375b7e]">
        <svg width="150" height="76" viewBox="0 0 150 76">
          <path d="M15.500 45 C32 29 60 5 85 5 C98 5 101 16 94 31 C102 21 111 23 107 37 C112 33 116 36 115 44 C112 38 107 41 103 44 L98.500 44 C103 36 104 29 100 31 C94 36 89 42 78 45 C84 38 89 27 88 21 C86 14 64 23 41 45 Z" fill="#9bd8c6" />
          <g fill="#fff" fontFamily="Noto Sans CJK TC, sans-serif" fontSize="10.800" textAnchor="end">
            <text x="74" y="59.500">香港</text>
            <text x="74" y="70.500">國際機場</text>
          </g>
          <path d="M77.500 50 V71" stroke="#c3cfdb" strokeWidth=".8" />
          <g fill="#fff" fontFamily="Liberation Sans, sans-serif" fontSize="6.600">
            <text x="80.500" y="55.500" textLength="48">HONG KONG</text>
            <text x="80.500" y="63" textLength="63">INTERNATIONAL</text>
            <text x="80.500" y="71" textLength="34">AIRPORT</text>
          </g>
        </svg>
        <h1 className="-mt-[6px] ml-[41px] flex-1 text-[19px] leading-[30px]">Storm Water System<span className="mr-[9px] ml-[7px]">-</span>IoT Dashboard</h1>
        <svg width="9" height="5" viewBox="0 0 9 5" className="mr-[20px]"><path d="M.5 .5 H8 L4.250 4.300 Z" fill="#fff" /></svg>
        <svg width="16" height="16" viewBox="0 0 16 16" fill="none" stroke="#fff" strokeWidth="1.400" className="-mt-[5px] mr-[29px]">
          <circle cx="8" cy="8" r="6.800" />
          <path d="M5.900 6.400 C5.900 3.600 10.200 3.700 10.200 6.200 C10.200 7.800 8 7.800 8 9.600 M8 10.800 V12.200" />
        </svg>
      </header>

      <div className="flex h-[794px]">
        <aside className="w-[335px] shrink-0 px-[15px]">
          <button className="flex h-[28.500px] w-[32px] items-center justify-center border-2 border-t-[#5a5a5a] border-r-black border-b-black border-l-[#5a5a5a] bg-[#efefef]">
            <svg width="8" height="14" viewBox="0 0 8 14" fill="none" stroke="#222" strokeWidth="1.200"><path d="M7 .7 L1.200 7 L7 13.300" /></svg>
          </button>
          <nav>
            {NAV.map((n) => (
              <a key={n} className={n === 'IoT Dashboard' ? 'block w-[305px] rounded bg-[#375b7e] py-2 pl-8 text-white' : 'block w-[305px] py-2 pl-8 text-[#00bc8c]'}>{n}</a>
            ))}
          </nav>
          <p className="mt-[47px] tracking-[-0.03px] text-[#888]">© Airport Authority Hong Kong. All Rights Reserved.</p>
        </aside>

        <main className="flex w-[1585px] flex-col border-t border-l border-[#666]">
          <div className="flex h-[430px] border-b border-[#777]">
            {/* map column */}
            <section className="w-[935px] shrink-0 border-r-2 border-[#666]">
              <div className="h-[77px]">
                <div className="flex h-[37px]">
                  <span className="w-[50px] pt-[7px] pl-2">Alert</span>
                  <span className="mt-1 flex h-[25px] w-[50px] justify-end rounded-[9px] bg-[#808080]"><span className="h-[25px] w-[25px] rounded-full bg-white" /></span>
                  <span className="ml-2 w-[244px] pt-[7px] text-[#ffff00]">Threshold</span>
                  <span className="flex-1 pt-[7px] whitespace-pre">30 Jun, 2024 18:21   -   7 Jul, 2024 18:22</span>
                  <button className="mr-[4px] flex h-[37px] w-[140px] items-center justify-center gap-1 rounded bg-[#444]">
                    Download Data
                    <svg width="8" height="5" viewBox="0 0 8 5"><path d="M.3 .5 H7.700 L4 4.300 Z" fill="#fff" /></svg>
                  </button>
                </div>
                <div className="flex h-9 items-center pl-[4px]">
                  <button className="mr-2 h-9 w-[79px] rounded bg-[#444]">24 Hours</button>
                  <button className="mr-2 h-9 w-[62px] rounded bg-[#375b7e]">7 Days</button>
                  <button className="mr-2 h-9 w-[71px] rounded bg-[#444]">14 Days</button>
                  <button className="mr-2 h-9 w-[72px] rounded bg-[#444]">30 Days</button>
                  <DateInput />
                  <span className="w-[21px] text-center">-</span>
                  <DateInput />
                  <button className="ml-[4px] flex h-9 w-[42px] items-center justify-center rounded bg-[#444]">
                    <svg width="16" height="18" viewBox="0 0 16 18" fill="none" stroke="#fff" strokeWidth="1.200" className="-mt-1">
                      <path d="M1.500 1.500 H14.500 V3.500 L9.800 8.500 V16 H6.400 V8.500 L1.500 3.500 Z M2 3.800 H14 M8 9 V16" />
                    </svg>
                  </button>
                </div>
              </div>
              <div className="relative h-[352px] w-[933px] overflow-hidden">
                <MapCanvas />
                <div className="absolute top-[15px] left-[15px] flex flex-col gap-[10px]">
                  <MapButton><path d="M3.500 3.500 H15 M3.500 8 H15 M3.500 12.500 H15 M1 3.500 H2 M1 8 H2 M1 12.500 H2" /></MapButton>
                  <MapButton><path d="M1.500 8 L8 1.500 L14.500 8 M3 6.800 V15 H6.500 V10.500 H9.500 V15 H13 V6.800 M3.500 5.500 V2.500 H5.500 V3.700" /></MapButton>
                  <MapButton><circle cx="8" cy="8" r="4.800" /><path d="M8 .5 V4 M8 12 V15.500 M.5 8 H4 M12 8 H15.500" /></MapButton>
                  <div className="divide-y divide-[#3c3c3c]">
                    <MapButton><path d="M8 3.500 V12.500 M3.500 8 H12.500" /></MapButton>
                    <MapButton><path d="M3 8.500 H13" /></MapButton>
                  </div>
                  <MapButton><path d="M3.800 3 Q4 1 6 1 H9.500 Q11.800 1 12 3 V11 L8 15.500 L3.800 11 Z" /><circle cx="8" cy="5" r="1" fill="#a0a0a0" /></MapButton>
                </div>
                <div className="absolute top-[286px] left-[15px] flex h-[37px] w-[127px] items-center rounded-[5px] bg-[#555]/75 pb-[3px] pl-4 text-[14.700px] text-[#bcbcbc]">Scale: 1:32000</div>
                <div className="absolute top-[15px] right-[15px] flex flex-col gap-[10px]">
                  <MapButton><path d="M.5 .5 H15.500 V15.500 H.5 Z M12.500 .5 L11 4 L7 8 L4.500 9 M15.500 9 H11 L9 11 V15.500 M5 15.500 L6.500 12.500 M3.500 11 L6 12 M8 9 L8.500 12" /></MapButton>
                  <MapButton round><path d="M5.500 15.500 L11.500 1 M7.500 3 L11.500 .8 L13 5" /></MapButton>
                  <MapButton><path d="M3.500 13.500 A7 7 0 1 1 13.200 13 M13.500 8.800 V13.500 H9 M7.500 8 H8.500" /></MapButton>
                </div>
                <div className="absolute top-[291px] right-[15px]">
                  <MapButton><path d="M1.500 .5 H11 L14.500 4 V15.500 H1.500 Z M4 3.500 H9 M4 6 H8 M9.500 6 H12.500 M4 8.200 H8 M9.500 8.200 H12.500 M4 10.400 H8 M9.500 10.400 H12.500 M4 12.800 H8 M9.500 12.800 H12.500" /></MapButton>
                </div>
                <span className="absolute right-[5px] bottom-0 font-['Noto_Sans'] text-[11.700px] leading-[16px] text-[#d0d0d0]">Powered by Esri</span>
              </div>
            </section>

            {/* latest status */}
            <section className="flex min-w-0 flex-1 flex-col">
              <div className="flex h-[40px] shrink-0 items-center border-b border-[#666] bg-black">
                <span className="w-[610px] pl-[38px] text-center">Latest Status</span>
                <button className="flex h-[33px] w-[35px] items-center justify-center rounded bg-[#375b7e]">
                  <svg width="26" height="25" viewBox="0 0 26 25">
                    <path d="M.5 1 H23 L14.500 12 V21 L9.500 17 V12 Z" fill="#fff" />
                    <circle cx="19" cy="17.500" r="7" fill="#375b7e" />
                    <circle cx="19" cy="17.500" r="6" fill="#fff" />
                    <path d="M16.800 15.300 L21.200 19.700 M21.200 15.300 L16.800 19.700" stroke="#375b7e" strokeWidth="1.600" />
                  </svg>
                </button>
              </div>
              <div className="flex min-h-0 flex-1">
                <div className="w-[627px] overflow-hidden">
                  <div className="grid h-[39px] grid-cols-[50px_44px_232px_125px_52px_57px_52px] items-center border-b border-[#555] bg-black pl-[14px] font-bold">
                    <span>Pan</span><span>Data</span><span>Sensor Name</span><span>Reading</span><span>Depth</span><span>Velocity</span><span>Battery</span>
                  </div>
                  {SENSORS.map((s) => (
                    <div key={s.name} className="grid h-[43.2px] grid-cols-[53px_45px_242px_124px_57px_57px_38px] items-center border-b border-[#444] pt-px pl-[10px]">
                      <span className="flex h-[26px] w-[34px] items-center justify-center rounded-[3px] bg-[#444]"><PanIcon /></span>
                      <span className="flex h-[26px] w-[34px] items-center justify-center rounded-[3px] bg-[#444]"><CloudIcon /></span>
                      <span className="tracking-[-0.03px]">{s.name}</span>
                      <span className={s.on ? 'flex h-[26px] w-[34px] items-center justify-center rounded-[3px] bg-[#375b7e]' : 'flex h-[26px] w-[34px] items-center justify-center rounded-[3px] bg-[#444]'}><BarsIcon /></span>
                      <Waves color={s.depth} />
                      <Flow />
                      <Battery color={s.battery} level={s.level} />
                    </div>
                  ))}
                </div>
                <div className="flex w-[21px] flex-col items-center bg-[#f1f1f1]">
                  <div className="flex h-[21px] items-center"><Triangle dir="up" /></div>
                  <div className="h-[240px] w-[17px] bg-[#c1c1c1]" />
                  <div className="mt-auto flex h-[22px] items-center"><Triangle dir="down" dark /></div>
                </div>
              </div>
            </section>
          </div>

          {/* main charts */}
          <div className="flex h-[208px] w-[1583px] shrink-0 border-t-[3px] border-b-2 border-t-white border-b-[#666]">
            <div className="w-[528px] border-r-2 border-[#666]">
              <Panel title="Water Level (mPD)" legend>
                <svg viewBox="336 541 526 149" className="block h-[149px] w-[526px] shrink-0">
                  <Labels x={379} items={[['4.200', 562.5], ['2.000', 660]]} />
                  <path d="M388 562 H852" stroke="#8e8e8e" strokeWidth="2" />
                  <path d={`${line(LEVEL_A)} V659 H388 Z`} fill="url(#tealFill)" />
                  <path d={`${line(LEVEL_B)} V659 H388 Z`} fill="url(#redFill)" />
                  <path d="M388 659 H852" stroke="#a5a9aa" strokeWidth="2" />
                  <rect x="388" y="660" width="465" height="6" fill="url(#ticks)" />
                  <path d={line(LEVEL_A)} fill="none" stroke="#00acc1" strokeWidth="4" />
                  <path d={line(LEVEL_B)} fill="none" stroke="#f44336" strokeWidth="4" />
                </svg>
              </Panel>
            </div>
            <div className="w-[529px] border-r-2 border-[#666]">
              <Panel title="Velocity (m/s)" legend>
                <svg viewBox="864 541 527 149" className="block h-[149px] w-[527px] shrink-0">
                  <Labels x={907} items={[['1.800', 562.5], ['1.200', 595], ['0.600', 627.5], ['0.000', 660]]} />
                  <path d="M916 562 H1380" stroke="#8e8e8e" strokeWidth="2" />
                  <path d="M916 594.500 H1380 M916 626.500 H1380" stroke="#bcbcbc" strokeWidth="1" />
                  <rect x="916" y="658" width="465" height="8" fill="url(#ticks)" />
                  <path d={`${line(VELOCITY)} Z`} fill="#00acc1" />
                  <path d={line(VELOCITY)} fill="none" stroke="#00acc1" strokeWidth="4" />
                </svg>
              </Panel>
            </div>
            <div className="w-[526px]">
              <Panel title="Battery (V)" legend>
                <svg viewBox="1393 541 526 149" className="block h-[149px] w-[526px] shrink-0">
                  <Labels x={1440} items={[['11.300', 562.5], ['10.950', 660]]} />
                  <path d="M1450 562 H1909" stroke="#8e8e8e" strokeWidth="2" />
                  <path d={`${line(BATTERY_A)} V659 H1450 Z`} fill="url(#tealFill)" />
                  <path d={`${line(BATTERY_B)} V659 H1450 Z`} fill="url(#redFill)" />
                  <path d="M1450 659 H1909" stroke="#a5a9aa" strokeWidth="2" />
                  <rect x="1449.500" y="660" width="460" height="6" fill="url(#ticks)" />
                  <path d={line(BATTERY_A)} fill="none" stroke="#00acc1" strokeWidth="3.800" />
                  <path d={line(BATTERY_B)} fill="none" stroke="#f44336" strokeWidth="3.800" />
                </svg>
              </Panel>
            </div>
          </div>

          {/* alerts and small charts */}
          <div className="flex h-[154px] w-[1583px] shrink-0 border-b border-[#666]">
            <div className="flex w-[1057px] border-r-2 border-[#666]">
              <div className="flex w-[1034px] flex-col overflow-hidden">
                <div className="grid h-[62px] shrink-0 grid-cols-[200px_85px_66px_79px_75px_529px] items-end border-b border-[#555] bg-black pb-[9px] pl-3 leading-[22px] font-bold">
                  <span>Alert Time</span><span className="w-[60px]">Sensor Name</span><span>Depth</span><span>Velocity</span><span>Battery</span><span>Recipients</span>
                </div>
                {ALERTS.map((a) => (
                  <div key={a.time} className="grid h-[31.500px] shrink-0 grid-cols-[200px_85px_66px_79px_75px_529px] items-center border-b border-[#444] pb-px pl-3 whitespace-nowrap">
                    <span className="tracking-[-0.12px]">{a.time}</span><span>SMHA13</span>
                    <span className="text-[#a0e6fa]">{a.depth}</span>
                    <span className="text-[#a0e6fa]">{a.velocity}</span>
                    <span className={a.low ? 'text-[#ffa500]' : 'text-[#ffff00]'}>{a.battery}</span>
                    <span>{RECIPIENTS}</span>
                  </div>
                ))}
                <div className="mt-auto flex h-[18px] shrink-0 items-center bg-[#f1f1f1]">
                  <span className="flex w-[21px] justify-center"><Triangle dir="left" /></span>
                  <span className="mt-[2px] h-4 w-[854px] bg-[#c1c1c1]" />
                  <span className="ml-auto flex w-[18px] justify-center"><Triangle dir="right" dark /></span>
                </div>
              </div>
              <div className="flex w-[21px] flex-col bg-[#f1f1f1]">
                <div className="flex h-[21px] items-center justify-center"><Triangle dir="up" /></div>
                <div className="mx-auto h-[21px] w-[17px] bg-[#c1c1c1]" />
                <div className="mt-auto flex h-[24px] items-center justify-center"><Triangle dir="down" dark /></div>
                <div className="h-[18px] bg-[#dcdcdc]" />
              </div>
            </div>
            <div className="w-[262px] border-r border-[#666]">
              <Panel title="Rainfall (mm)">
                <svg viewBox="1393 745 261 123" className="block h-[123px] w-[261px] shrink-0">
                  <Labels x={1415} items={[['3', 768], ['2', 792], ['1', 816], ['0', 840]]} />
                  <path d="M1425 767 H1644 M1425 791 H1644 M1425 815 H1644" stroke="#8e8e8e" strokeWidth="1.800" />
                  <rect x="1424" y="840" width="221" height="6" fill="#dcdcdc" />
                  <path d="M1425 839 H1644 M1485 839 V767.500 M1536.500 839 V789 M1629.500 839 V813" stroke="#6495ed" strokeWidth="4.400" />
                </svg>
              </Panel>
            </div>
            <div className="w-[264px]">
              <Panel title="Tidal (mCD)">
                <svg viewBox="1655 745 264 123" className="block h-[123px] w-[264px] shrink-0">
                  <Labels x={1692} items={[['3.00', 768], ['2.00', 792], ['1.00', 816], ['0.00', 840]]} />
                  <path d="M1702 767 H1908 M1702 791 H1908 M1702 815 H1908 M1702 839 H1908" stroke="#8e8e8e" strokeWidth="1.800" />
                  <path d={`${smooth(TIDAL)} V839 H1702 Z`} fill="url(#yellowFill)" />
                  <rect x="1701" y="840" width="208" height="6" fill="url(#ticksWide)" />
                  <path d={smooth(TIDAL)} fill="none" stroke="#ffeb3b" strokeWidth="3.600" />
                </svg>
              </Panel>
            </div>
          </div>
        </main>
      </div>
    </div>
  );
}
